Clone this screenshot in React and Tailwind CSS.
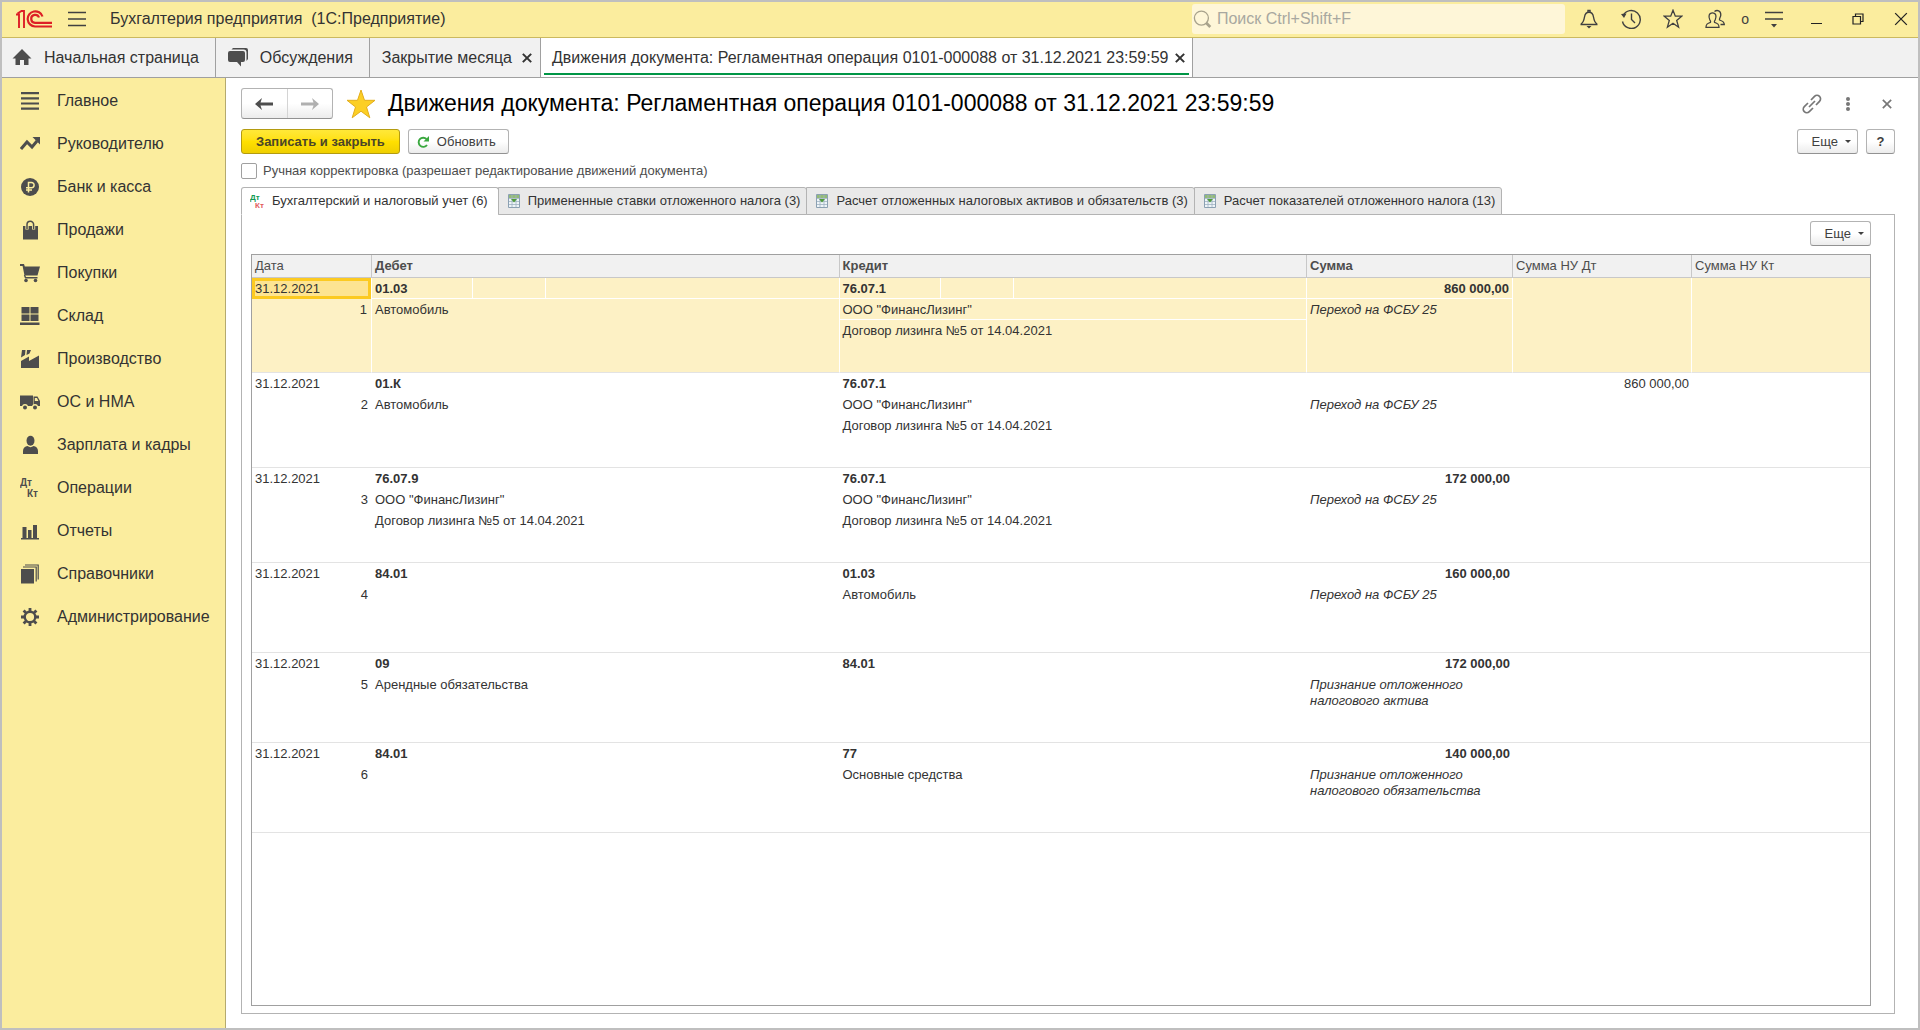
import React, { useState } from "react";
import clsx from "clsx";

const entries = [
  {
    date: "31.12.2021",
    debit: ["01.03", "Автомобиль"],
    credit: ["76.07.1", 'ООО "ФинансЛизинг"', "Договор лизинга №5 от 14.04.2021"],
    sum: "860 000,00",
    note: "Переход на ФСБУ 25",
    taxDt: "",
    tall: true,
  },
  {
    date: "31.12.2021",
    debit: ["01.К", "Автомобиль"],
    credit: ["76.07.1", 'ООО "ФинансЛизинг"', "Договор лизинга №5 от 14.04.2021"],
    sum: "",
    note: "Переход на ФСБУ 25",
    taxDt: "860 000,00",
    tall: true,
  },
  {
    date: "31.12.2021",
    debit: ["76.07.9", 'ООО "ФинансЛизинг"', "Договор лизинга №5 от 14.04.2021"],
    credit: ["76.07.1", 'ООО "ФинансЛизинг"', "Договор лизинга №5 от 14.04.2021"],
    sum: "172 000,00",
    note: "Переход на ФСБУ 25",
    taxDt: "",
    tall: true,
  },
  {
    date: "31.12.2021",
    debit: ["84.01"],
    credit: ["01.03", "Автомобиль"],
    sum: "160 000,00",
    note: "Переход на ФСБУ 25",
    taxDt: "",
  },
  {
    date: "31.12.2021",
    debit: ["09", "Арендные обязательства"],
    credit: ["84.01"],
    sum: "172 000,00",
    note: "Признание отложенного налогового актива",
    taxDt: "",
  },
  {
    date: "31.12.2021",
    debit: ["84.01"],
    credit: ["77", "Основные средства"],
    sum: "140 000,00",
    note: "Признание отложенного налогового обязательства",
    taxDt: "",
  },
];

/* Sidebar icons, all on a 20x20 grid */
const navItems = [
  {
    title: "Главное",
    icon: <path d="M1 1h18v2.200H1zM1 6.200h18v2.200H1zM1 11.400h18v2.200H1zM1 16.600h18v2.200H1z" />,
  },
  {
    title: "Руководителю",
    icon: (
      <>
        <path d="M1 15l6-7 5 5 5-6" fill="none" stroke="currentColor" strokeWidth="3" />
        <path d="M12.500 3H20v7.500z" />
      </>
    ),
  },
  {
    title: "Банк и касса",
    icon: (
      <>
        <circle cx="10" cy="10" r="9" />
        <path
          d="M8.500 15.500V5.500h3a2.500 2.500 0 010 5.200H6M6 13h6"
          fill="none"
          stroke="#fbed9e"
          strokeWidth="1.500"
        />
      </>
    ),
  },
  {
    title: "Продажи",
    icon: (
      <>
        <path d="M3 6h15v13.500H3z" />
        <path d="M7 9.500V5a3.300 3.300 0 016.600 0v4.500" fill="none" stroke="#fbed9e" strokeWidth="3.200" />
        <path d="M7 9V4.500a3.300 3.300 0 016.600 0V9" fill="none" stroke="currentColor" strokeWidth="1.500" />
      </>
    ),
  },
  {
    title: "Покупки",
    icon: (
      <>
        <path d="M0 1h4l.8 2.500H20l-2.500 9H4.500L2.600 3H0z" />
        <path d="M4.500 12l1 2.700H17.500" fill="none" stroke="currentColor" strokeWidth="1.400" />
        <circle cx="6" cy="17.500" r="1.800" />
        <circle cx="15.500" cy="17.500" r="1.800" />
      </>
    ),
  },
  {
    title: "Склад",
    icon: <path d="M1.500 1h8v6.500h-8zM10.500 1h8v6.500h-8zM1.500 8.500h8V15h-8zM10.500 8.500h8V15h-8zM0 16.500h19.500v2.500H0z" />,
  },
  {
    title: "Производство",
    icon: (
      <path d="M1 19v-7l8-4.500v4.500L19 6.500V19zM2 1h3.500l-.5 5-4 2.500zM7 1h4L9.500 4.500 6.500 6z" />
    ),
  },
  {
    title: "ОС и НМА",
    icon: (
      <>
        <path d="M0 3.500h13V14H0z" />
        <path d="M13.500 4.500h4L20 9v5h-6.500z" />
        <path d="M14.800 6h2.200l1.400 3h-3.600z" fill="#fbed9e" />
        <circle cx="5" cy="15" r="3" fill="#fbed9e" />
        <circle cx="15" cy="15" r="3" fill="#fbed9e" />
        <circle cx="5" cy="15.500" r="2" />
        <circle cx="15" cy="15.500" r="2" />
      </>
    ),
  },
  {
    title: "Зарплата и кадры",
    icon: (
      <>
        <ellipse cx="10.500" cy="5.800" rx="4" ry="5" />
        <path d="M3 19v-3c0-3 2-4.500 4.500-5 2 1.500 4 1.500 6 0 2.500.5 4.500 2 4.500 5v3z" />
      </>
    ),
  },
  {
    title: "Операции",
    icon: (
      <g className="text-[10px] font-bold">
        <text x="0" y="8">Дт</text>
        <text x="7" y="19">Кт</text>
      </g>
    ),
  },
  {
    title: "Отчеты",
    icon: <path d="M1 17h18v1.500H1zM2.500 6h4v11h-4zM8 9h3.500v8H8zM13 4h4v13h-4z" />,
  },
  {
    title: "Справочники",
    icon: (
      <>
        <path d="M1 5h13v14.500H1z" />
        <path d="M3 3h13.200v14.500M5 1h13.200v14.500" fill="none" stroke="currentColor" strokeWidth="1.200" />
      </>
    ),
  },
  {
    title: "Администрирование",
    icon: (
      <g fill="none" stroke="currentColor">
        <circle cx="10" cy="10" r="5.300" strokeWidth="2.400" />
        <path
          d="M10 1v3.500M10 15.500V19M1 10h3.500M15.500 10H19M3.600 3.600l2.500 2.500M13.900 13.900l2.500 2.500M3.600 16.400l2.500-2.500M13.900 6.100l2.500-2.500"
          strokeWidth="2.800"
        />
      </g>
    ),
  },
];

const registerTabs = [
  "Бухгалтерский и налоговый учет (6)",
  "Примененные ставки отложенного налога (3)",
  "Расчет отложенных налоговых активов и обязательств (3)",
  "Расчет показателей отложенного налога (13)",
];

const greyButton =
  "flex h-[25px] items-center rounded-[3px] border border-[#b3b3b3] border-b-[#929292] bg-linear-to-b from-white from-50% to-[#ececec] text-[#404040]";

const Logo = () => (
  <svg className="h-[18px] w-9 text-[#dd1f26]" viewBox="0 0 36 18" fill="none" stroke="currentColor">
    <path d="M0 4.500h3V18M1.500 3.500L5.500 1H8v17" strokeWidth="1.900" />
    <path d="M26.500 6.500A7.600 7.600 0 1019 16.500H36" strokeWidth="2.200" />
    <path d="M23 7.500a4 4 0 10-4 5.300H36" strokeWidth="2.200" />
  </svg>
);

const CloseIcon = ({ className, strokeWidth = 1.5 }) => (
  <svg className={className} viewBox="0 0 12 12" fill="none" stroke="currentColor" strokeWidth={strokeWidth}>
    <path d="M1 1l10 10M11 1L1 11" />
  </svg>
);

const SheetIcon = () => (
  <svg className="h-[14px] w-3" viewBox="0 0 12 14">
    <path d="M.5.500h11v13H.500z" fill="#eef4f8" stroke="#8ba0b2" />
    <path d="M1 1h10v3H1z" fill="#93bb76" />
    <path d="M4 1v12M8 1v12M1 4.500h10M1 7.500h10M1 10.500h10" stroke="#9fb2c2" strokeWidth=".8" />
    <path d="M3 5h6L6 8.500z" fill="#4f9a3c" />
  </svg>
);

const MoreButton = () => (
  <button type="button" className={clsx(greyButton, "w-[61px] justify-end gap-[7px] pr-[6px] text-[13px]")}>
    Еще
    <svg className="h-[3px] w-[6px]" viewBox="0 0 6 3" fill="currentColor">
      <path d="M0 0h6L3 3z" />
    </svg>
  </button>
);

/* Account on the first line, analytics under it */
const AccountCell = ({ lines, active, split }) => (
  <td className={clsx("p-0 align-top", active && "border-r border-white")}>
    <div className={clsx("flex h-[21px] border-b font-bold", active ? "border-white" : "border-transparent")}>
      <span className={clsx("w-[101px] pl-[3px]", active && "border-r border-white")}>{lines[0]}</span>
      {active && <span className="w-[73px] border-r border-white" />}
    </div>
    {lines.slice(1).map((line, i) => (
      <div
        key={i}
        className={clsx("h-[21px] border-b pl-[3px]", split && i === 0 ? "border-white" : "border-transparent")}
      >
        {line}
      </div>
    ))}
  </td>
);

const App = () => {
  const [tab, setTab] = useState(0);
  const [selected, setSelected] = useState(0);
  const [manual, setManual] = useState(false);
  const [search, setSearch] = useState("");

  return (
    <div className="flex min-h-screen flex-col border-2 border-[#bfbfbf] bg-white font-['Liberation_Sans',Arial,sans-serif] text-[#333]">
      {/* Title bar */}
      <header className="flex h-9 shrink-0 items-center border-b border-[#cbb95f] bg-[#fbed9e] pb-px pl-[14px] text-[#404040]">
        <Logo />
        <button type="button" aria-label="Меню" className="ml-4">
          <svg className="h-4 w-[18px]" viewBox="0 0 18 16" stroke="currentColor" strokeWidth="1.3">
            <path d="M0 1.500h18M0 8h18M0 14.500h18" />
          </svg>
        </button>
        <span className="ml-6 text-base whitespace-pre text-[#333]">
          Бухгалтерия предприятия  (1С:Предприятие)
        </span>

        <label className="ml-auto flex h-[30px] w-[373px] items-center rounded-[3px] bg-[#fef6d8] text-[#a8a28c]">
          <svg className="ml-px h-5 w-5" viewBox="0 0 20 20" fill="none" stroke="currentColor" strokeWidth="1.400">
            <circle cx="9" cy="9" r="7.500" />
            <path d="M14 14l4.500 4.500" strokeWidth="3" />
          </svg>
          <input
            type="text"
            aria-label="Поиск"
            placeholder="Поиск Ctrl+Shift+F"
            value={search}
            onChange={(e) => setSearch(e.target.value)}
            className="ml-[5px] w-full bg-transparent text-base text-[#333] outline-none placeholder:text-[#a8a8a0]"
          />
        </label>

        <div className="flex items-center gap-[22px] pr-[10px] pl-[14px]">
          <button type="button" aria-label="Уведомления">
            <svg className="h-5 w-5" viewBox="0 0 20 20" fill="none" stroke="currentColor" strokeWidth="1.400">
              <path d="M1.500 15.500h17M2 15c2.500-1.500 3-4 3.500-7C6 5 7.500 3.300 10 3.300S14 5 14.500 8c.5 3 1 5.500 3.500 7" />
              <path d="M9 3V1.500h2V3" />
              <path d="M7.500 17h5L10 19.500z" fill="currentColor" stroke="none" />
            </svg>
          </button>
          <button type="button" aria-label="История">
            <svg className="h-5 w-5" viewBox="0 0 20 20" fill="none" stroke="currentColor" strokeWidth="1.400">
              <path d="M2.200 6.500a9 9 0 11-.7 6M10.500 4.500v6l3.500 3.500" />
              <path d="M0 5l5.500-.5L3 9z" fill="currentColor" stroke="none" />
            </svg>
          </button>
          <button type="button" aria-label="Избранное">
            <svg className="h-5 w-5" viewBox="0 0 20 20" fill="none" stroke="currentColor" strokeWidth="1.300">
              <path d="M10 1.200l2.300 6h6.400l-5 4.200 1.900 6.800-5.600-4-5.600 4 1.900-6.800-5-4.200h6.400z" />
            </svg>
          </button>
          <button type="button" aria-label="Пользователи" className="flex items-center gap-4 text-sm">
            <svg className="h-5 w-5" viewBox="0 0 20 20" fill="none" stroke="currentColor" strokeWidth="1.300">
              <path d="M1 18.300c0-3 1-4 4.500-5 .5-.8 0-1.500-.7-2.500-1.500-3-1-7 2.700-7s4.200 4 2.700 7c-.7 1-1.200 1.700-.7 2.500 3.500 1 4.500 2 4.500 5z" />
              <path d="M9.500 2.500C12 .5 16 1.500 15.800 6c0 2-1.800 3.500-1.300 5 3.500 1 4.800 2 4.800 4.500H15.500" />
            </svg>
            o
          </button>
          <button type="button" aria-label="Настройки" className="-ml-[6px]">
            <svg className="h-[18px] w-[18px]" viewBox="0 0 18 18" stroke="currentColor" strokeWidth="1.300">
              <path d="M0 2.500h18M0 9h18" />
              <path d="M6 14h6l-3 3.500z" fill="currentColor" stroke="none" />
            </svg>
          </button>
          <div className="flex items-center gap-[30px] pl-[6px] text-[#222]">
            <button type="button" aria-label="Свернуть">
              <svg className="h-3 w-[11px]" viewBox="0 0 11 12" stroke="currentColor">
                <path d="M0 10.500h11" />
              </svg>
            </button>
            <button type="button" aria-label="Восстановить">
              <svg className="h-3 w-3" viewBox="0 0 12 12" fill="none" stroke="currentColor" strokeWidth="1.200">
                <path d="M1 3.500h7.500v7.500H1zM3.500 3.500V1H11v7.500H8.500" />
              </svg>
            </button>
            <button type="button" aria-label="Закрыть программу">
              <CloseIcon className="h-[14px] w-[14px]" strokeWidth={1.1} />
            </button>
          </div>
        </div>
      </header>

      {/* Open windows */}
      <nav className="flex h-10 shrink-0 border-b border-[#a0a0a0] bg-[#f1f1f1] text-base">
        <a href="#home" className="flex items-center gap-3 border-r border-[#a0a0a0] pr-4 pl-[10px]">
          <svg className="h-5 w-5 text-[#4d4d4d]" viewBox="0 0 20 20" fill="currentColor">
            <path d="M10 1L.5 10.500h3V17h4.500v-5h4v5h4.500v-6.500h3z" />
          </svg>
          Начальная страница
        </a>
        <a href="#talks" className="flex items-center gap-3 border-r border-[#a0a0a0] pr-4 pl-3">
          <svg className="h-5 w-5 text-[#4d4d4d]" viewBox="0 0 20 20" fill="currentColor">
            <path d="M5 0h13a2 2 0 012 2v9l-1.500 2V4.500a3 3 0 00-3-3H3.500z" />
            <path d="M2 3h13a2 2 0 012 2v7a2 2 0 01-2 2h-2v4.500L9 14H2a2 2 0 01-2-2V5a2 2 0 012-2z" />
          </svg>
          Обсуждения
        </a>
        <div className="flex items-center gap-[10px] border-r border-[#a0a0a0] pr-2 pl-3">
          <a href="#month">Закрытие месяца</a>
          <button type="button" aria-label="Закрыть вкладку">
            <CloseIcon className="h-[10px] w-[10px]" strokeWidth={2.4} />
          </button>
        </div>
        <div className="flex border-r border-[#a0a0a0] bg-white px-[3px] pb-[2px]">
          <div className="flex items-center gap-[6px] border-b-2 border-[#009646] pt-1 pr-1 pl-2">
            <a href="#doc">Движения документа: Регламентная операция 0101-000088 от 31.12.2021 23:59:59</a>
            <button type="button" aria-label="Закрыть вкладку">
              <CloseIcon className="h-[10px] w-[10px]" strokeWidth={2.4} />
            </button>
          </div>
        </div>
      </nav>

      <div className="flex flex-1">
        {/* Sections */}
        <aside className="w-56 shrink-0 border-r border-[#b5aa6e] bg-[#fbed9e] pt-px">
          <ul>
            {navItems.map((item) => (
              <li key={item.title}>
                <a href="#section" className="flex h-[43px] items-center gap-[17px] pl-[18px] text-base">
                  <svg className="h-5 w-5 text-[#4d4d4d]" viewBox="0 0 20 20" fill="currentColor">
                    {item.icon}
                  </svg>
                  {item.title}
                </a>
              </li>
            ))}
          </ul>
        </aside>

        <main className="flex min-w-0 flex-1 flex-col pt-[10px] pr-[23px] pb-[14px] pl-[15px]">
          {/* Heading */}
          <div className="flex h-[31px] items-center">
            <div className="flex h-[31px] w-[92px] rounded-[3px] border border-[#b3b3b3] border-b-[#929292] bg-linear-to-b from-white from-50% to-[#ececec]">
              <button type="button" aria-label="Назад" className="flex flex-1 items-center justify-center border-r border-[#d4d4d4] text-[#4d4d4d]">
                <svg className="h-3 w-[18px]" viewBox="0 0 18 12" fill="currentColor">
                  <path d="M0 6l7-6-1.500 4.500H18v3H5.500L7 12z" />
                </svg>
              </button>
              <button type="button" aria-label="Вперед" className="flex flex-1 items-center justify-center text-[#b0b0b0]">
                <svg className="h-3 w-[18px]" viewBox="0 0 18 12" fill="currentColor">
                  <path d="M18 6l-7-6 1.500 4.500H0v3h12.500L11 12z" />
                </svg>
              </button>
            </div>
            <button type="button" aria-label="В избранное" className="ml-[13px]">
              <svg className="h-[30px] w-[30px]" viewBox="0 0 30 30">
                <path
                  d="M15 1l3.500 10.300H29l-8.500 6.700 3.300 10.800L15 22.200l-8.800 6.600L9.500 18 1 11.300h10.500z"
                  fill="#fccf25"
                  stroke="#e3ae1c"
                />
              </svg>
            </button>
            <h1 className="ml-3 text-[23px] whitespace-nowrap text-black">
              Движения документа: Регламентная операция 0101-000088 от 31.12.2021 23:59:59
            </h1>
            <div className="ml-auto flex items-center pr-[3px] text-[#777]">
              <button type="button" aria-label="Получить ссылку">
                <svg className="h-5 w-5" viewBox="0 0 20 20" fill="none" stroke="currentColor" strokeWidth="1.700">
                  <path d="M9 6l3.500-3.700a3.500 3.500 0 015 5L14 11M6 9l-3.700 3.700a3.500 3.500 0 005 5L11 14M7 13l6-6" />
                </svg>
              </button>
              <button type="button" aria-label="Действия" className="ml-6">
                <svg className="h-[14px] w-1" viewBox="0 0 4 14" fill="currentColor">
                  <circle cx="2" cy="2" r="2" />
                  <circle cx="2" cy="7" r="2" />
                  <circle cx="2" cy="12" r="2" />
                </svg>
              </button>
              <button type="button" aria-label="Закрыть" className="ml-8">
                <CloseIcon className="h-[10px] w-[10px]" strokeWidth={2} />
              </button>
            </div>
          </div>

          {/* Commands */}
          <div className="mt-[10px] flex text-[13px]">
            <button
              type="button"
              className="h-[25px] rounded-[3px] border border-[#b39b10] bg-linear-to-b from-[#ffe838] via-[#ffe000] to-[#efcf00] px-[14px] font-bold text-[#4b4628]"
            >
              Записать и закрыть
            </button>
            <button type="button" className={clsx(greyButton, "ml-2 gap-2 pr-3 pl-2")}>
              <svg className="h-3 w-3" viewBox="0 0 12 12">
                <path d="M9.500 3A4.600 4.600 0 1010 9" fill="none" stroke="#3aa83f" strokeWidth="1.900" />
                <path d="M12 0v5.500H6.500z" fill="#3aa83f" />
              </svg>
              Обновить
            </button>
            <div className="ml-auto flex gap-2">
              <MoreButton />
              <button type="button" className={clsx(greyButton, "w-[29px] justify-center font-bold")}>
                ?
              </button>
            </div>
          </div>

          <div className="mt-2 flex h-[18px] items-center text-[13px] text-[#4d4d4d]">
            <input
              id="manual"
              type="checkbox"
              checked={manual}
              onChange={(e) => setManual(e.target.checked)}
              className="h-4 w-4 appearance-none rounded-[2px] border border-[#a0a0a0] bg-white checked:bg-[#ffe000]"
            />
            <label htmlFor="manual" className="ml-[6px]">
              Ручная корректировка (разрешает редактирование движений документа)
            </label>
          </div>

          {/* Registers */}
          <div className="z-10 mt-[7px] -mb-px flex h-7 text-[13px]" role="tablist">
            {registerTabs.map((name, i) => (
              <button
                key={name}
                type="button"
                role="tab"
                aria-selected={tab === i}
                onClick={() => setTab(i)}
                className={clsx(
                  "flex items-center border border-[#b3b3b3]",
                  i === 0 ? "gap-[7px] pr-[10px] pl-2" : "-ml-px gap-2 pr-[6px] pl-[9px]",
                  tab === i ? "rounded-t-[3px] border-b-white bg-white" : "rounded-tr-[3px] bg-[#e9e9e9]"
                )}
              >
                {i === 0 ? (
                  <svg className="h-[15px] w-[15px] text-[8px] font-bold" viewBox="0 0 15 15">
                    <text x="0" y="6" fill="#129a54">Дт</text>
                    <text x="5" y="14" fill="#e25b5b">Кт</text>
                  </svg>
                ) : (
                  <SheetIcon />
                )}
                {name}
              </button>
            ))}
          </div>

          <section className="flex flex-1 flex-col border border-[#b3b3b3] pt-[6px] pr-[23px] pb-[7px] pl-[9px]">
            <div className="flex justify-end">
              <MoreButton />
            </div>

            <div className="mt-2 flex-1 border border-[#a0a0a0]">
              <table className="w-full table-fixed border-separate border-spacing-0 text-left text-[13px] leading-[22px]">
                <colgroup>
                  <col className="w-[120px]" />
                  <col />
                  <col />
                  <col className="w-[206px]" />
                  <col className="w-[179px]" />
                  <col className="w-[178px]" />
                </colgroup>
                <thead className="text-[#4d4d4d]">
                  <tr>
                    {["Дата", "Дебет", "Кредит", "Сумма", "Сумма НУ Дт", "Сумма НУ Кт"].map((name, i) => (
                      <th
                        key={name}
                        className={clsx(
                          "h-[23px] border-b border-[#c8c8c8] bg-[#f1f1f1] p-0 pl-[3px]",
                          i < 5 && "border-r",
                          i > 0 && i < 4 ? "font-bold" : "font-normal"
                        )}
                      >
                        {name}
                      </th>
                    ))}
                  </tr>
                </thead>
                <tbody>
                  {entries.map((row, i) => {
                    const active = selected === i;
                    return (
                      <tr
                        key={i}
                        onClick={() => setSelected(i)}
                        className={clsx(
                          "*:border-b *:border-b-[#e3e3e3]",
                          row.tall ? "h-[95px]" : "h-[90px]",
                          active && "bg-[#fdf1c5]"
                        )}
                      >
                        <td className={clsx("p-0 align-top", active && "border-r border-white")}>
                          <div
                            className={clsx(
                              "h-[21px]",
                              active ? "border-[3px] border-[#fcca21] bg-[#fde492] leading-4" : "pl-[3px]"
                            )}
                          >
                            {row.date}
                          </div>
                          <div className="pr-1 text-right">{i + 1}</div>
                        </td>
                        <AccountCell lines={row.debit} active={active} split={false} />
                        <AccountCell lines={row.credit} active={active} split={active} />
                        <td className={clsx("p-0 align-top", active && "border-r border-white")}>
                          <div
                            className={clsx(
                              "h-[21px] border-b pr-[3px] text-right font-bold",
                              active ? "border-white" : "border-transparent"
                            )}
                          >
                            {row.sum}
                          </div>
                          <div className="px-[3px] pt-[3px] leading-4 italic">{row.note}</div>
                        </td>
                        <td className={clsx("p-0 pr-[3px] text-right align-top", active && "border-r border-white")}>
                          {row.taxDt}
                        </td>
                        <td className="p-0" />
                      </tr>
                    );
                  })}
                </tbody>
              </table>
            </div>
          </section>
        </main>
      </div>
    </div>
  );
};

export default App;
